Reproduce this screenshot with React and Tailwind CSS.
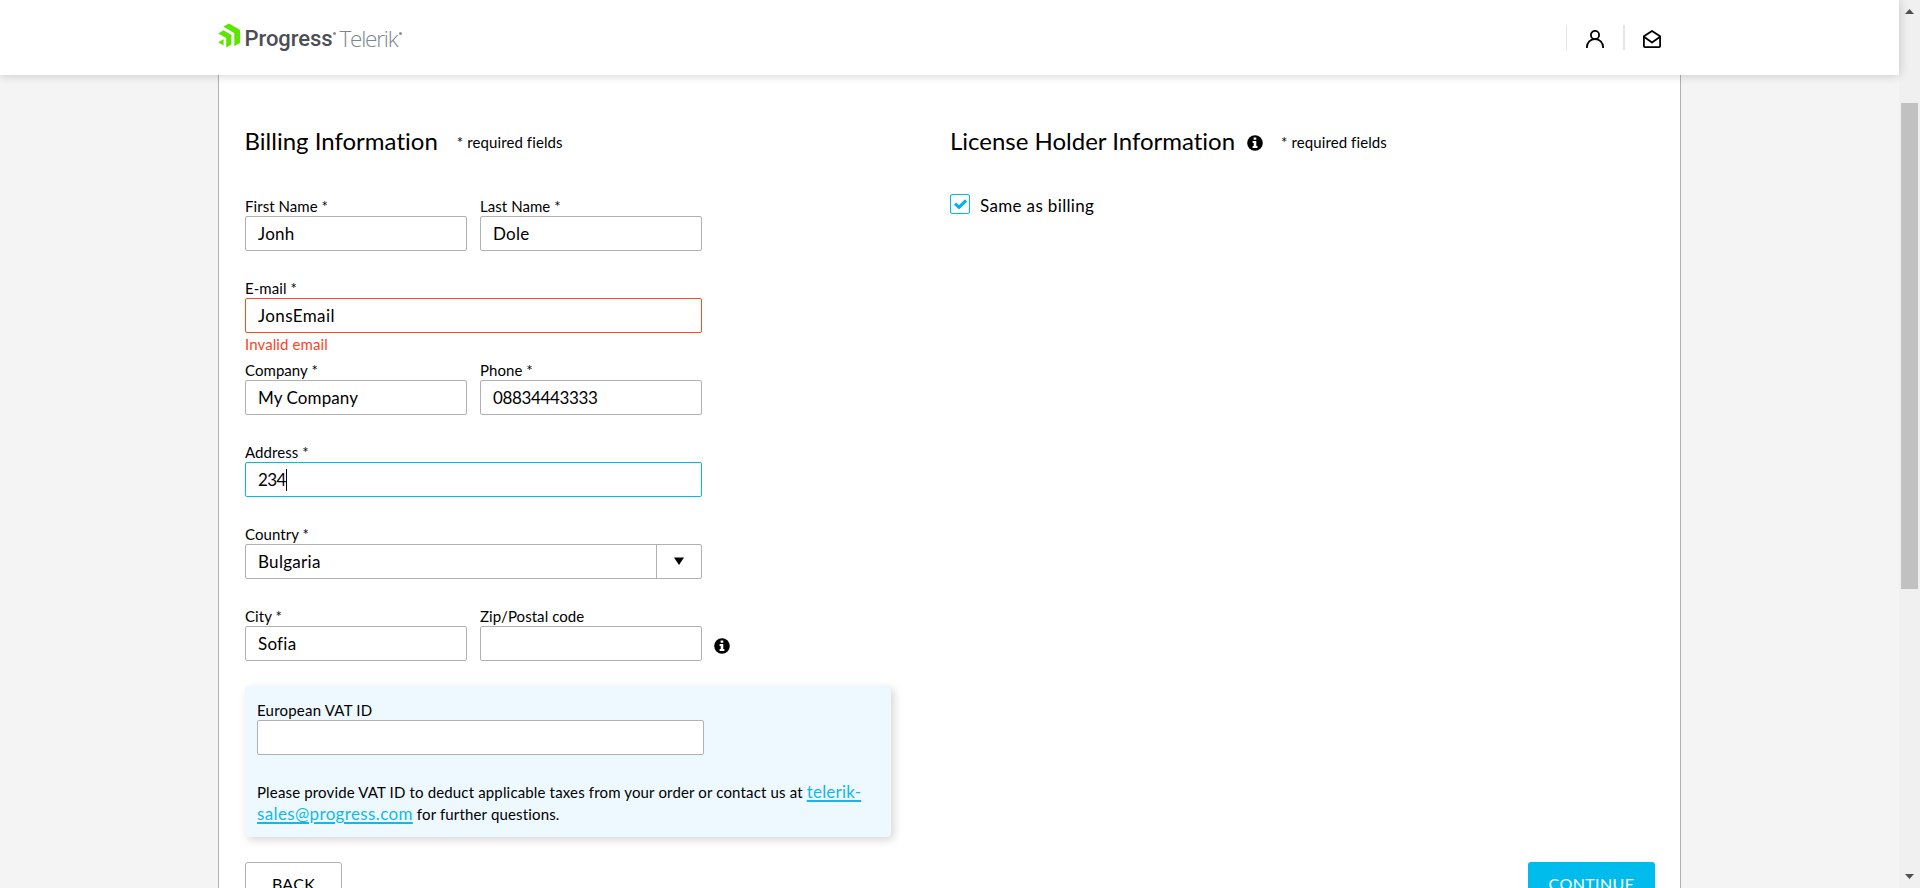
function Field({ label, value, tracking = "tracking-[0.25px]", width = "w-[222px]", border = "border-[#b1b1b1]", caret = false, children }) {
  return (
    <div className={`flex flex-col ${width}`}>
      <label className="h-[19px] text-[15px] leading-[19px] tracking-[0.06px] whitespace-nowrap">{label}</label>
      <div className={`flex h-[35px] items-center rounded-[2px] border bg-white pl-[12px] text-[17px] ${border}`}>
        <span className={`leading-[22px] ${tracking}`}>{value}</span>
        {caret && <span className="h-[22px] w-px bg-black" />}
        {children}
      </div>
    </div>
  );
}

function InfoIcon() {
  return (
    <svg className="size-4 shrink-0" viewBox="0 0 16 16">
      <circle cx="8" cy="8" r="7.8" fill="#000" />
      <path fill="#fff" d="M6.6 2.6h2.7v2.2H6.6zM5.6 6.1h3.7v4.9h1.1v1.9H5.6V11h1.1V8H5.6z" />
    </svg>
  );
}

function Logo() {
  return (
    <div className="flex h-full items-start pt-[23px]">
      <svg className="h-[25px] w-[23px]" viewBox="0 0 23 25" fill="#5ce500">
        <path d="M5.3 3.6 11 .5 22.1 6.9V19.8L16.3 23.3V10.2Z" />
        <path d="M.2 10.5 5.4 7.3 13.4 12V21.6L8.2 24.6V14.9Z" />
        <path d="M.2 19.3 5.6 16.3V22.4Z" />
      </svg>
      <div className="ml-[3.5px] flex items-start">
        <span className="mt-[3.5px] font-['Roboto',sans-serif] text-[22px] leading-[24px] font-medium tracking-[-0.07px] text-[#4b4e52]">Progress</span>
        <span className="mt-[9px] ml-px size-[3px] rounded-full bg-[#8a8d91]" />
        <span className="mt-[3.5px] ml-[3px] font-['Open_Sans',sans-serif] text-[22.5px] leading-[24px] font-light tracking-[-1.2px] text-[#7c858d]">Telerik</span>
        <span className="mt-[9px] ml-[1.5px] size-[3px] rounded-full bg-[#8a8d91]" />
      </div>
    </div>
  );
}

export default function App() {
  return (
    <div className="flex h-[888px] w-[1920px] overflow-hidden bg-[#f4f4f4] font-['Lato',sans-serif] text-black">
      <div className="flex w-[1899px] flex-col">
        <header className="relative z-10 flex h-[75px] shrink-0 justify-between bg-white pr-[238px] pl-[218px] shadow-[0_0_10px_rgba(0,0,0,0.2)]">
          <Logo />
          <div className="flex items-start pt-[25px]">
            <div className="h-[25px] w-px bg-[#e5e5e5]" />
            <svg className="mt-[5px] ml-[19px] h-[18px] w-[18px]" viewBox="0 0 18 18" fill="none" stroke="#000" strokeWidth="1.8">
              <circle cx="9" cy="5" r="4.1" />
              <path d="M.9 18v-.9a8.1 8.1 0 0 1 16.2 0v.9" />
            </svg>
            <div className="ml-[19px] h-[25px] w-[2px] bg-[#e5e5e5]" />
            <svg className="mt-[5px] ml-[18px] h-[18px] w-[18px]" viewBox="0 0 18 18" fill="none" stroke="#000" strokeWidth="1.8" strokeLinejoin="round">
              <path d="M.9 6.3 9 1l8.1 5.3v9.8q0 1-1 1H1.900q-1 0-1-1z" />
              <path d="M.9 6.8 9 12.600l8.1-5.8" />
            </svg>
          </div>
        </header>

        <main className="ml-[218px] flex w-[1463px] grow border-x border-[#b1b1b1] bg-white pt-[51px] pr-[25px] pl-[26px]">
          <section className="flex w-[705px] shrink-0 flex-col items-start">
            <div className="flex h-[30px] items-baseline gap-[19px]">
              <h1 className="ml-[-0.5px] text-[24px] leading-[30px] tracking-[0.01px]">Billing Information</h1>
              <p className="relative top-[-2px] text-[15px] tracking-[0.1px]">* required fields</p>
            </div>
            <div className="mt-[41px] flex flex-col gap-7">
              <div className="flex gap-[13px]">
                <Field label="First Name *" value="Jonh" />
                <Field label="Last Name *" value="Dole" />
              </div>
              <div className="flex h-[54px] flex-col">
                <Field label="E-mail *" value="JonsEmail" width="w-[457px]" border="border-[#ff4b14]" tracking="tracking-[0.4px]" />
                <p className="mt-[2px] text-[15px] leading-[19px] tracking-[0.1px] text-[#ff4325]">Invalid email</p>
              </div>
              <div className="flex gap-[13px]">
                <Field label="Company *" value="My Company" tracking="tracking-[0.1px]" />
                <Field label="Phone *" value="08834443333" tracking="tracking-[-0.35px]" />
              </div>
              <Field label="Address *" value="234" width="w-[457px]" border="border-[#00bcec]" tracking="tracking-[-0.6px]" caret />
              <Field label="Country *" value="Bulgaria" width="w-[457px]" tracking="tracking-[0.3px]">
                <div className="ml-auto flex h-full w-[45px] items-center justify-center border-l border-[#b1b1b1]">
                  <svg className="mb-px h-[8px] w-[10px]" viewBox="0 0 10 8"><path d="M0 .5h10L5 8z" /></svg>
                </div>
              </Field>
              <div className="flex gap-[13px]">
                <Field label="City *" value="Sofia" />
                <Field label="Zip/Postal code" value="" />
                <div className="mt-[31px] ml-[-1px]"><InfoIcon /></div>
              </div>
            </div>
            <div className="mt-[25px] flex h-[151px] w-[646px] shrink-0 flex-col rounded-[4px] bg-[#edf8ff] px-3 pt-[15px] shadow-[3px_3px_8px_rgba(0,0,0,0.16)]">
              <Field label={<span className="tracking-[0.22px]">European VAT ID</span>} value="" width="w-[447px]" />
              <p className="mt-[26px] text-[15px] leading-[22px] tracking-[0.155px] whitespace-nowrap">
                Please provide VAT ID to deduct applicable taxes from your order or contact us at{" "}
                <a className="text-[17px] leading-none tracking-[0.2px] text-[#14b8e6] underline decoration-2 underline-offset-2">
                  telerik-<br /><span className="tracking-[0.36px]">sales@progress.com</span>
                </a>{" "}
                for further questions.
              </p>
            </div>
            <button className="mt-[25px] flex h-[47px] w-[97px] shrink-0 justify-center rounded-[3px] border border-[#b1b1b1] bg-white pt-[10px] text-[16px] leading-[22px] tracking-[0.3px]">BACK</button>
          </section>

          <section className="flex grow flex-col">
            <div className="flex h-[30px] items-baseline">
              <h2 className="text-[24px] leading-[30px] tracking-[-0.01px] whitespace-nowrap">License Holder Information</h2>
              <div className="relative top-[2px] ml-[12px] self-center"><InfoIcon /></div>
              <p className="relative top-[-2px] ml-[18px] text-[15px] tracking-[0.1px]">* required fields</p>
            </div>
            <div className="mt-[38px] flex gap-[10px]">
              <div className="flex size-5 items-center justify-center rounded-[2px] border border-[#00bcec]">
                <svg className="h-[10px] w-[13px]" viewBox="0 0 13 10" fill="none" stroke="#00b4f0" strokeWidth="3.2"><path d="M1 4.600 5 8.300 12 1.400" /></svg>
              </div>
              <span className="mt-[1px] text-[17px] leading-[22px] tracking-[0.35px]">Same as billing</span>
            </div>
            <button className="mt-[645px] flex h-[47px] w-[127px] shrink-0 justify-center self-end rounded-[3px] bg-[#00bcec] pt-[11px] text-[16px] leading-[22px] tracking-[0.4px] text-white">CONTINUE</button>
          </section>
        </main>
      </div>

      <div className="flex w-[21px] flex-col items-center bg-[#f0f0f0] pr-px">
        <svg className="mt-[9px] h-[5px] w-[9px]" viewBox="0 0 9 5" fill="#505050"><path d="M0 5h9L4.500 0z" /></svg>
        <div className="mt-[89px] h-[486px] w-[17px] bg-[#c1c1c1]" />
        <svg className="mt-auto mb-[9px] h-[5px] w-[9px]" viewBox="0 0 9 5" fill="#505050"><path d="M0 0h9L4.500 5z" /></svg>
      </div>
    </div>
  );
}
